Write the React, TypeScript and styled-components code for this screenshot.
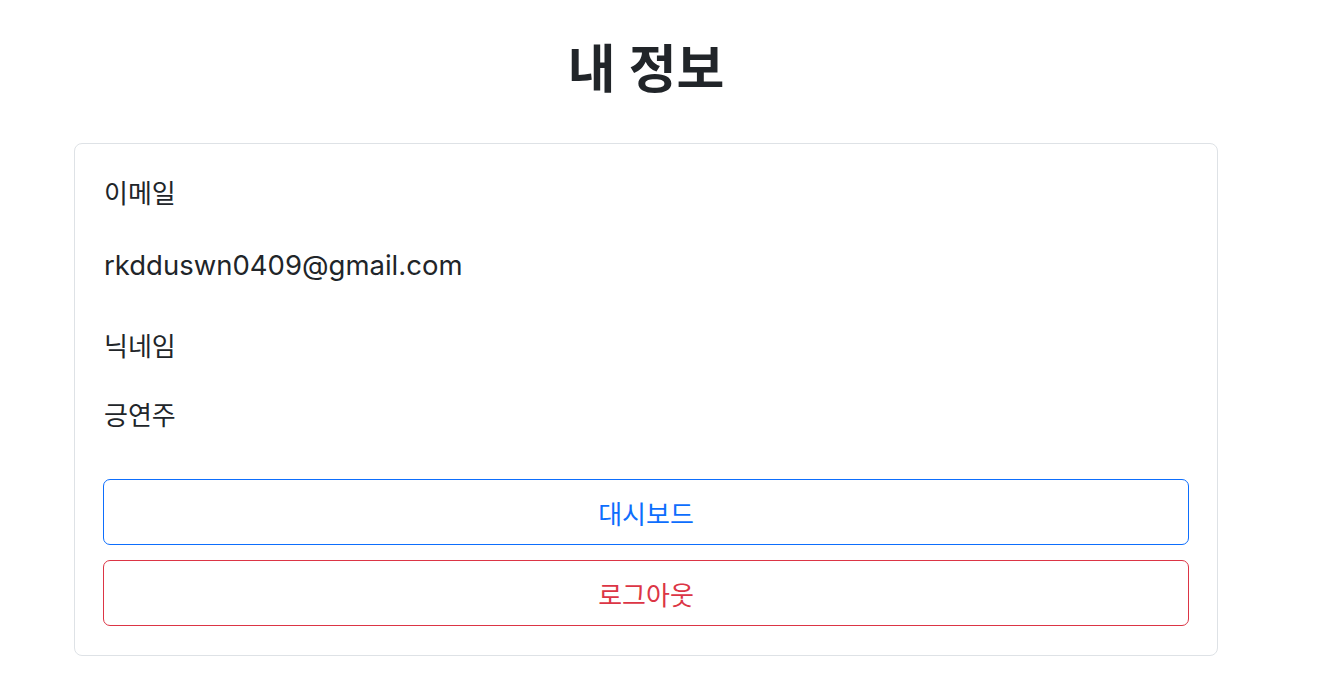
import React from "react";
import styled, { createGlobalStyle } from "styled-components";

const GlobalStyle = createGlobalStyle`
  html, body {
    margin: 0;
    padding: 0;
    background: #ffffff;
  }
  body {
    font-family: Inter, "Noto Sans CJK KR", sans-serif;
    color: #212529;
  }
`;

const Page = styled.main`
  padding: 0 106px 0 74px;
  display: flex;
  flex-direction: column;
`;

const Title = styled.h1`
  margin: 0;
  height: 143px;
  display: flex;
  align-items: center;
  justify-content: center;
  padding-bottom: 12px;
  box-sizing: border-box;
  font-size: 52px;
  font-weight: 600;
  color: #212529;
`;

const Card = styled.section`
  border: 1px solid #dee2e6;
  border-radius: 8px;
  padding: 29px 28px;
  display: flex;
  flex-direction: column;
`;

const Text = styled.p<{ $gap: number; $size?: number }>`
  margin: ${(p) => p.$gap}px 0 0;
  padding-left: 1px;
  font-size: ${(p) => p.$size ?? 26}px;
  line-height: 42px;
  color: #212529;
`;

const Actions = styled.div`
  margin-top: 42px;
  display: flex;
  flex-direction: column;
  gap: 15px;
`;

const OutlineButton = styled.button<{ $color: string }>`
  height: 66px;
  width: 100%;
  background: #ffffff;
  border: 1px solid ${(p) => p.$color};
  border-radius: 7px;
  color: ${(p) => p.$color};
  font-family: Inter, "Noto Sans CJK KR", sans-serif;
  font-size: 26px;
  cursor: pointer;
`;

export default function App() {
  return (
    <>
      <GlobalStyle />
      <Page>
        <Title>내 정보</Title>
        <Card>
          <Text $gap={0}>이메일</Text>
          <Text $gap={29} $size={27.5}>rkdduswn0409@gmail.com</Text>
          <Text $gap={40}>닉네임</Text>
          <Text $gap={27}>긍연주</Text>
          <Actions>
            <OutlineButton $color="#0d6efd">대시보드</OutlineButton>
            <OutlineButton $color="#dc3545">로그아웃</OutlineButton>
          </Actions>
        </Card>
      </Page>
    </>
  );
}
